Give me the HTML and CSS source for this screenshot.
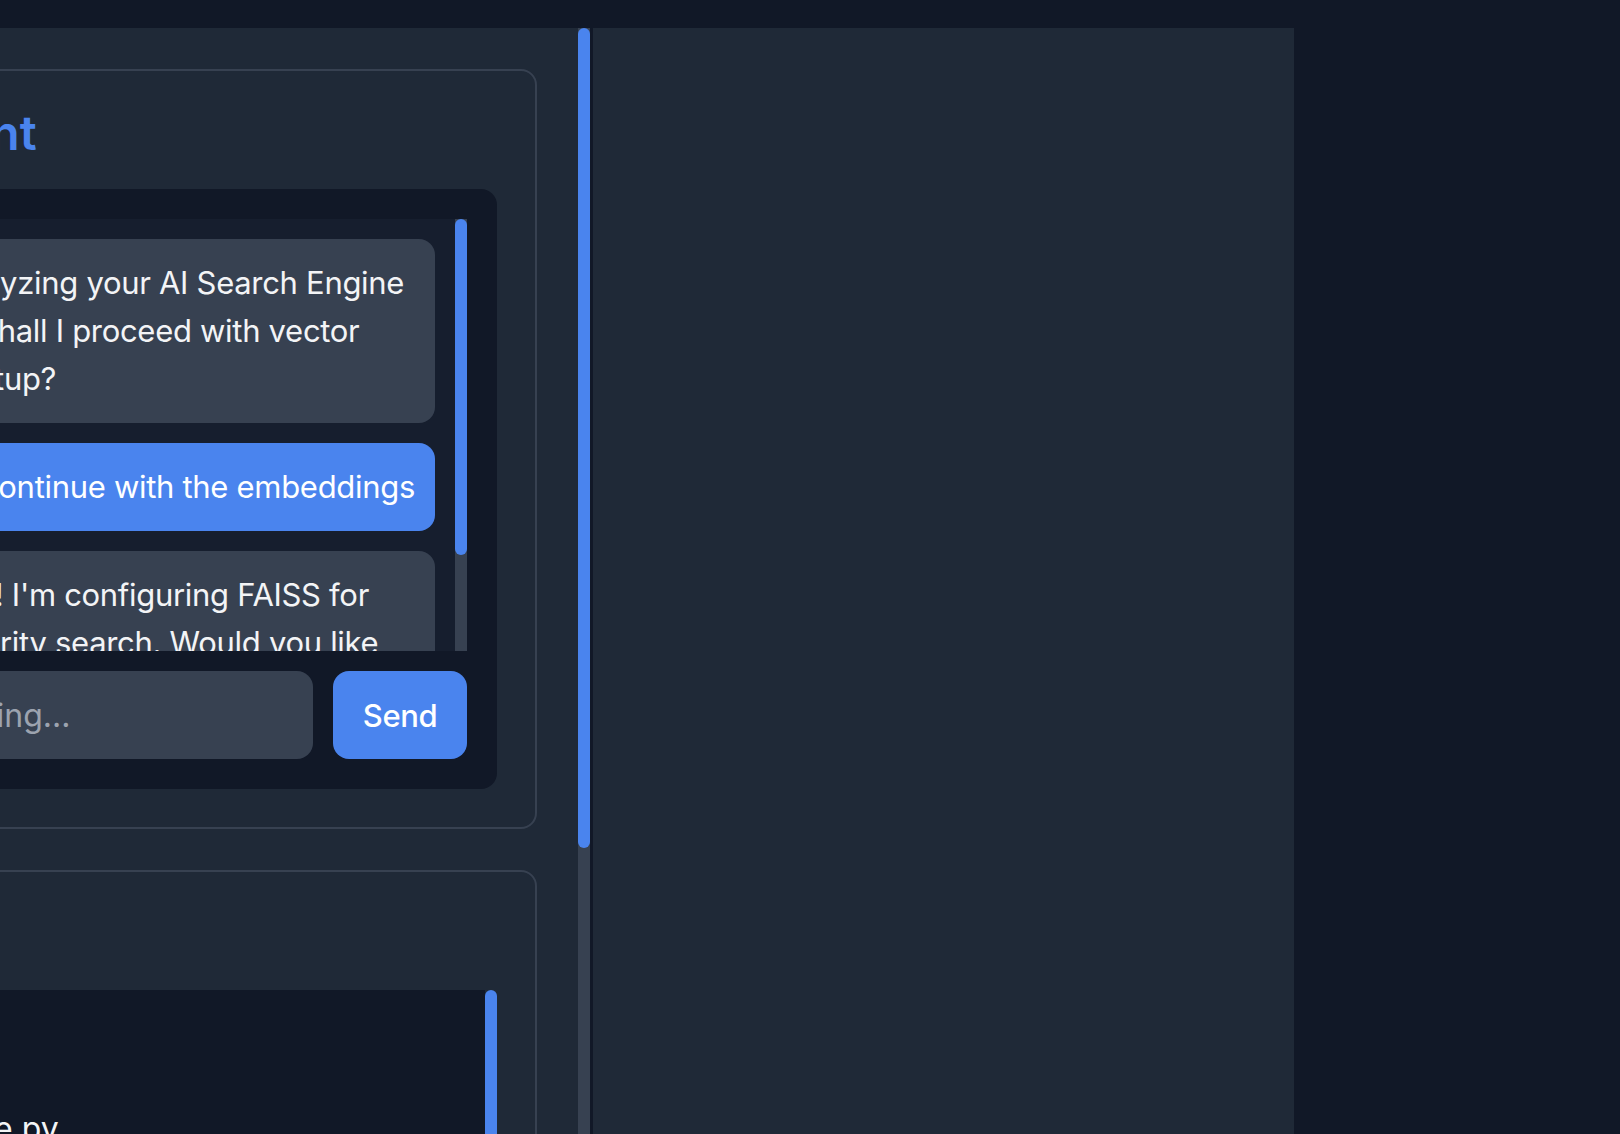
FILE: index.html
```html
<!DOCTYPE html>
<html lang="en">
<head>
<meta charset="utf-8">
<title>AI Assistant</title>
<link rel="stylesheet" href="styles.css">
</head>
<body>
  <div class="topbar"></div>
  <div class="main">
    <div class="left">
      <div class="left-scroll">
        <div class="left-inner">
          <section class="card">
            <h2 class="card-title">AI Assistant</h2>
            <div class="chat">
              <div class="messages-wrap">
                <div class="messages">
                  <div class="bubble">I'm now analyzing your AI Search Engine<br>codebase. Shall I proceed with vector<br>database setup?</div>
                  <div class="bubble user">Yes, continue with the embeddings</div>
                  <div class="bubble">Wise choice! I'm configuring FAISS for<br>vector similarity search. Would you like<br>me to tune the index parameters?</div>
                </div>
                <div class="vscroll"><div class="thumb chat-thumb"></div></div>
              </div>
              <div class="input-row">
                <input class="chat-input" type="text" placeholder="Ask me anything...">
                <button class="send">Send</button>
              </div>
            </div>
          </section>
          <section class="card">
            <h2 class="card-title">Files</h2>
            <div class="files-wrap">
              <div class="files">
                <div class="file">main.py</div>
                <div class="file">search_engine.py</div>
                <div class="file">embeddings.py</div>
              </div>
              <div class="vscroll clear"><div class="thumb files-thumb"></div></div>
            </div>
          </section>
        </div>
      </div>
      <div class="vscroll"><div class="thumb main-thumb"></div></div>
    </div>
    <div class="right"></div>
  </div>
</body>
</html>
```

FILE: styles.css
```css
* {
  box-sizing: border-box;
  margin: 0;
  padding: 0;
}

html, body {
  height: 100%;
}

body {
  background: #111827;
  font-family: Inter, "Noto Sans", sans-serif;
  overflow: hidden;
}

.topbar {
  height: 28px;
}

.main {
  display: flex;
  gap: 3px;
  height: 1106px;
}

.left {
  width: 590px;
  display: flex;
  background: #1f2937;
}

.left-scroll {
  flex: 1;
  overflow: hidden;
}

.left-inner {
  width: 869px;
  margin-left: -291px;
  padding: 41px 41px 0 0;
  display: flex;
  flex-direction: column;
  gap: 41px;
}

.card {
  border: 2px solid #374151;
  border-radius: 16px;
  padding: 38px;
}

.card-title {
  font-size: 48px;
  line-height: 48px;
  font-weight: 600;
  color: #4a84ee;
  padding-left: 10px;
  margin-bottom: 32px;
}

.chat {
  background: #111827;
  border-radius: 16px;
  padding: 30px;
}

.messages-wrap {
  display: flex;
  height: 432px;
}

.messages {
  flex: 1;
  background: #161e2e;
  padding: 20px;
  display: flex;
  flex-direction: column;
  gap: 20px;
  overflow: hidden;
}

.bubble {
  flex-shrink: 0;
  background: #374151;
  color: #f3f4f6;
  border-radius: 16px;
  padding: 20px;
  font-size: 31px;
  letter-spacing: -0.3px;
  line-height: 48px;
  white-space: nowrap;
}

.bubble.user {
  align-self: flex-end;
  background: #4a84ee;
  color: #ffffff;
}

.vscroll {
  width: 12px;
  flex-shrink: 0;
  background: #374151;
}

.vscroll.clear {
  background: #1f2937;
}

.thumb {
  width: 12px;
  background: #4a84ee;
  border-radius: 6px;
}

.chat-thumb {
  height: 336px;
}

.main-thumb {
  height: 820px;
}

.files-thumb {
  height: 300px;
}

.input-row {
  display: flex;
  gap: 20px;
  margin-top: 20px;
}

.chat-input {
  flex: 1;
  min-width: 0;
  height: 88px;
  background: #374151;
  border: none;
  border-radius: 16px;
  padding: 0 24px 0 12px;
  font-family: Inter, "Noto Sans", sans-serif;
  font-size: 32px;
  color: #f3f4f6;
  outline: none;
}

.chat-input::placeholder {
  color: #9ca3af;
}

.send {
  width: 134px;
  height: 88px;
  background: #4a84ee;
  color: #ffffff;
  border: none;
  border-radius: 16px;
  font-family: Inter, "Noto Sans", sans-serif;
  font-size: 31px;
  letter-spacing: -0.4px;
  font-weight: 500;
}

.files-wrap {
  display: flex;
  height: 400px;
}

.files {
  flex: 1;
  background: #111827;
  padding: 67px 24px 0 44px;
}

.file {
  font-size: 32px;
  line-height: 48px;
  color: #f3f4f6;
  white-space: nowrap;
}

.right {
  width: 701px;
  background: #1f2937;
}
```
